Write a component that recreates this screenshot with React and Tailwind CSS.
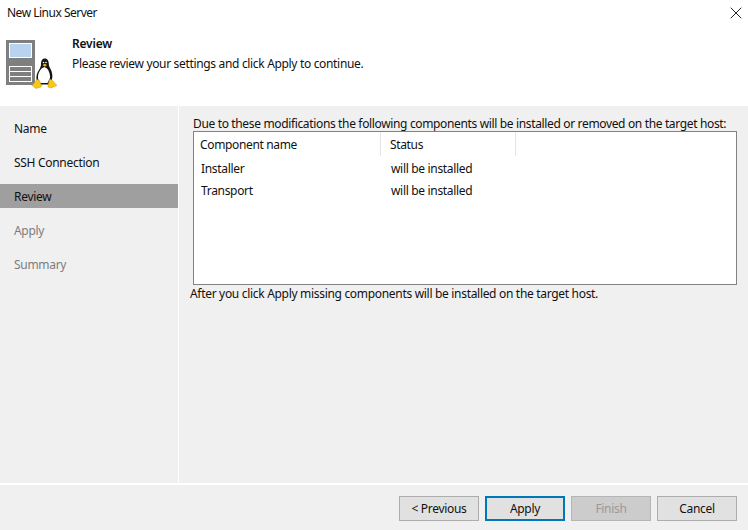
import { X } from 'lucide-react';

const steps = [
  { label: 'Name' },
  { label: 'SSH Connection' },
  { label: 'Review', active: true },
  { label: 'Apply', disabled: true },
  { label: 'Summary', disabled: true },
];

const rows = ['Installer', 'Transport'];

// Server box with the penguin sitting on its corner
const ServerIcon = () => (
  <svg width="58" height="50" viewBox="0 0 58 50" className="block">
    <rect x="0" y="0" width="29" height="45" fill="#7f7f7f" />
    <rect x="3.5" y="3.5" width="22" height="14" fill="#b9d3ee" stroke="#fff" />
    <rect x="3.5" y="26.5" width="22" height="15" fill="#7f7f7f" stroke="#fff" />
    <path d="M3.5 31.5H25.5M3.5 36.5H25.5" stroke="#fff" />
    <path d="M35 24c0-3 1-5.500 3.800-5.500s4 2.500 4 5.500c0 2 .7 3 2 5.500 1.500 3 2 6.500 1.200 10l-2 5h-11l-2.500-5c-.5-3.500.5-6.500 2.500-9.500 1.500-2.500 2-4 2-6z" fill="#151515" />
    <path d="M35.500 28.500c-2.500 2.500-4 6.500-3.500 10l1.500 4.500h8l2.500-5c.3-3.500-.8-7-3-9.500l-2.500-1.500z" fill="#fff" />
    <path d="M36.500 25l2.300-1.300 2.300 1.300-2.300 1.800z" fill="#e8b018" />
    <circle cx="37.500" cy="22.500" r=".8" fill="#fff" />
    <circle cx="40" cy="22.500" r=".8" fill="#fff" />
    <path d="M26 45.500l5-6 2.500 1 2 5-.5 1.500-5 1.500z" fill="#f7c816" stroke="#b58a10" strokeWidth=".4" />
    <path d="M42 45l1.500-6 2.500 1 5 5.500-6 2.500-3-1z" fill="#f7c816" stroke="#b58a10" strokeWidth=".4" />
  </svg>
);

const Button = ({ children, primary, disabled }) => (
  <button
    disabled={disabled}
    className={`w-[80px] h-[25px] text-xs tracking-[-0.3px] border ${
      primary
        ? 'border-2 border-[#0078b8] bg-[#e1e1e1] text-[#111]'
        : disabled
        ? 'border-[#b5b5b5] bg-[#cccccc] text-[#9a9a9a]'
        : 'border-[#adadad] bg-[#e1e1e1] text-[#111]'
    }`}
  >
    {children}
  </button>
);

export default function App() {
  return (
    <div className="w-[748px] h-[530px] flex flex-col bg-[#f0f0f0] text-[#111] text-xs font-['Noto_Sans','Open_Sans',sans-serif] overflow-hidden">
      {/* Header */}
      <div className="h-[106px] shrink-0 bg-white flex flex-col">
        <div className="h-[26px] flex items-center justify-between pl-[7px] pr-[2px]">
          <span className="tracking-[-0.5px]">New Linux Server</span>
          <X className="w-[20px] h-[20px] text-[#222]" strokeWidth={1.2} />
        </div>
        <div className="flex pt-[8px] pl-[6px]">
          <div className="w-[66px] pt-[6px]">
            <ServerIcon />
          </div>
          <div>
            <div className="font-semibold h-[20px] leading-[20px] tracking-[-0.2px]">Review</div>
            <div className="leading-[20px] tracking-[-0.33px]">Please review your settings and click Apply to continue.</div>
          </div>
        </div>
      </div>

      <div className="flex-1 flex min-h-0">
        {/* Steps */}
        <div className="w-[178px] shrink-0 pt-[10px]">
          {steps.map((s) => (
            <div
              key={s.label}
              className={`h-[24px] mb-[10px] pl-[14px] pt-[2px] flex items-center tracking-[-0.3px] ${
                s.active ? 'bg-[#9f9f9f]' : ''
              } ${s.disabled ? 'text-[#7d7d7d]' : ''}`}
            >
              {s.label}
            </div>
          ))}
        </div>
        <div className="w-px bg-white shrink-0" />

        {/* Content */}
        <div className="flex-1 pl-[11px] pr-[11px] pt-[9px]">
          <div className="pl-[3px] h-[16px] pt-[1px] leading-[16px] tracking-[-0.35px] whitespace-nowrap">
            Due to these modifications the following components will be installed or removed on the target host:
          </div>
          <div className="ml-[3px] h-[154px] border border-[#828282] bg-white">
            <div className="h-[24px] flex items-center">
              <div className="w-[187px] h-full pl-[6px] pt-[1px] flex items-center border-r border-[#e5e5e5] tracking-[-0.35px]">Component name</div>
              <div className="w-[135px] h-full pl-[9px] pt-[1px] flex items-center border-r border-[#e5e5e5] tracking-[-0.35px]">Status</div>
            </div>
            {rows.map((r) => (
              <div key={r} className="h-[22px] pt-[3px] flex items-center tracking-[-0.32px]">
                <div className="w-[187px] pl-[7px]">{r}</div>
                <div className="pl-[10px]">will be installed</div>
              </div>
            ))}
          </div>
          <div className="h-[16px] pt-[1px] leading-[16px] tracking-[-0.31px] whitespace-nowrap">
            After you click Apply missing components will be installed on the target host.
          </div>
        </div>
      </div>

      {/* Footer */}
      <div className="h-[47px] shrink-0 border-t-2 border-white flex justify-end gap-[6px] pr-[11px] pt-[11px]">
        <Button>&lt; Previous</Button>
        <Button primary>Apply</Button>
        <Button disabled>Finish</Button>
        <Button>Cancel</Button>
      </div>
    </div>
  );
}
